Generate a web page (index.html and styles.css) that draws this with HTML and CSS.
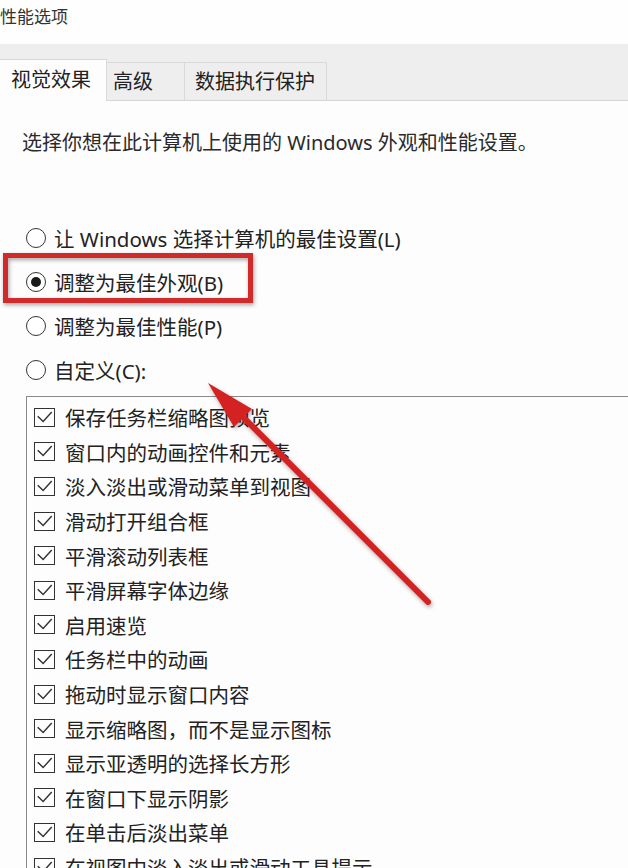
FILE: index.html
```html
<!DOCTYPE html>
<html lang="zh">
<head>
<meta charset="utf-8">
<link rel="stylesheet" href="styles.css">
</head>
<body>
<div class="page">
  <div class="title">性能选项</div>
  <div class="tabs">
    <div class="tab active">视觉效果</div>
    <div class="tab t2">高级</div>
    <div class="tab t3">数据执行保护</div>
  </div>
  <div class="content">
    <p class="desc">选择你想在此计算机上使用的 Windows 外观和性能设置。</p>
    <div class="radios">
      <div class="radio-row"><span class="radio"></span><span>让 Windows 选择计算机的最佳设置(L)</span></div>
      <div class="radio-row"><span class="radio checked"></span><span>调整为最佳外观(B)</span></div>
      <div class="radio-row"><span class="radio"></span><span>调整为最佳性能(P)</span></div>
      <div class="radio-row"><span class="radio"></span><span>自定义(C):</span></div>
    </div>
    <div class="list">
      <div class="item"><span class="cb"><svg viewBox="0 0 21 18"><polyline points="3,7.5 9,13.5 18.5,3"/></svg></span><span>保存任务栏缩略图预览</span></div>
      <div class="item"><span class="cb"><svg viewBox="0 0 21 18"><polyline points="3,7.5 9,13.5 18.5,3"/></svg></span><span>窗口内的动画控件和元素</span></div>
      <div class="item"><span class="cb"><svg viewBox="0 0 21 18"><polyline points="3,7.5 9,13.5 18.5,3"/></svg></span><span>淡入淡出或滑动菜单到视图</span></div>
      <div class="item"><span class="cb"><svg viewBox="0 0 21 18"><polyline points="3,7.5 9,13.5 18.5,3"/></svg></span><span>滑动打开组合框</span></div>
      <div class="item"><span class="cb"><svg viewBox="0 0 21 18"><polyline points="3,7.5 9,13.5 18.5,3"/></svg></span><span>平滑滚动列表框</span></div>
      <div class="item"><span class="cb"><svg viewBox="0 0 21 18"><polyline points="3,7.5 9,13.5 18.5,3"/></svg></span><span>平滑屏幕字体边缘</span></div>
      <div class="item"><span class="cb"><svg viewBox="0 0 21 18"><polyline points="3,7.5 9,13.5 18.5,3"/></svg></span><span>启用速览</span></div>
      <div class="item"><span class="cb"><svg viewBox="0 0 21 18"><polyline points="3,7.5 9,13.5 18.5,3"/></svg></span><span>任务栏中的动画</span></div>
      <div class="item"><span class="cb"><svg viewBox="0 0 21 18"><polyline points="3,7.5 9,13.5 18.5,3"/></svg></span><span>拖动时显示窗口内容</span></div>
      <div class="item"><span class="cb"><svg viewBox="0 0 21 18"><polyline points="3,7.5 9,13.5 18.5,3"/></svg></span><span>显示缩略图，而不是显示图标</span></div>
      <div class="item"><span class="cb"><svg viewBox="0 0 21 18"><polyline points="3,7.5 9,13.5 18.5,3"/></svg></span><span>显示亚透明的选择长方形</span></div>
      <div class="item"><span class="cb"><svg viewBox="0 0 21 18"><polyline points="3,7.5 9,13.5 18.5,3"/></svg></span><span>在窗口下显示阴影</span></div>
      <div class="item"><span class="cb"><svg viewBox="0 0 21 18"><polyline points="3,7.5 9,13.5 18.5,3"/></svg></span><span>在单击后淡出菜单</span></div>
      <div class="item"><span class="cb"><svg viewBox="0 0 21 18"><polyline points="3,7.5 9,13.5 18.5,3"/></svg></span><span>在视图中淡入淡出或滑动工具提示</span></div>
    </div>
  </div>
  <svg class="annot" viewBox="0 0 628 868" width="628" height="868">
    <rect class="hl" x="5.5" y="255.5" width="245" height="45"/>
    <g class="arrow">
      <line x1="428" y1="602" x2="238" y2="412"/>
      <polygon points="208,383 252,409 234,427"/>
    </g>
  </svg>
</div>
</body>
</html>
```

FILE: styles.css
```css
html, body {
  margin: 0;
  padding: 0;
  background: #fdfdfd;
  overflow: hidden;
}
.page {
  position: relative;
  width: 628px;
  height: 868px;
  overflow: hidden;
  font-family: "Noto Sans", "Noto Sans CJK SC", sans-serif;
  color: #222;
}
.title {
  height: 44px;
  line-height: 34px;
  font-size: 17px;
  color: #333;
  background: #fefefe;
}
.tabs {
  height: 56px;
  background: #efeeef;
  border-bottom: 1px solid #d6d6d6;
  display: flex;
  align-items: flex-end;
}
.tab {
  box-sizing: border-box;
  height: 38px;
  font-size: 20px;
  line-height: 38px;
  border: 1px solid #d9d9d9;
  border-bottom: none;
  color: #222;
}
.tab.active {
  height: 42px;
  width: 107px;
  padding-left: 11px;
  background: #fdfdfd;
  border-left: none;
  line-height: 40px;
  margin-bottom: -1px;
  position: relative;
  z-index: 1;
}
.tab.t2 {
  width: 78px;
  padding-left: 6px;
  border-left: none;
}
.tab.t3 {
  width: 142px;
  padding-left: 10px;
  border-left: none;
}
.content {
  padding-left: 22px;
}
.desc {
  margin: 27px 0 0 0;
  font-size: 20px;
  line-height: 30px;
  color: #2a2a2a;
}
.radios {
  margin-top: 58px;
  margin-left: 4px;
}
.radio-row {
  height: 44px;
  display: flex;
  align-items: center;
  gap: 8px;
  font-size: 20.5px;
  color: #222;
}
.radio {
  box-sizing: border-box;
  width: 20px;
  height: 20px;
  border: 1.5px solid #333;
  border-radius: 50%;
  background: #fff;
  display: flex;
  align-items: center;
  justify-content: center;
  flex: none;
}
.radio.checked::after {
  content: "";
  width: 10px;
  height: 10px;
  border-radius: 50%;
  background: #1a1a1a;
}
.list {
  margin-top: 4px;
  margin-left: 4px;
  width: 700px;
  height: 600px;
  border: 1px solid #8a8a8a;
  background: #fdfdfd;
  padding: 3px 0 0 7px;
}
.item {
  height: 34.6px;
  display: flex;
  align-items: center;
  gap: 10px;
  font-size: 20.5px;
  color: #222;
}
.cb {
  box-sizing: border-box;
  width: 21px;
  height: 19px;
  border: 1.5px solid #333;
  background: #fff;
  flex: none;
  display: flex;
}
.cb svg {
  width: 100%;
  height: 100%;
}
.cb polyline {
  fill: none;
  stroke: #333;
  stroke-width: 1.6;
}
.annot {
  position: absolute;
  left: 0;
  top: 0;
  pointer-events: none;
}
.hl {
  fill: none;
  stroke: #d12a2a;
  stroke-width: 5;
  filter: drop-shadow(1px 2px 2px rgba(0, 0, 0, 0.35));
}
.arrow {
  filter: drop-shadow(1px 2px 2px rgba(0, 0, 0, 0.35));
}
.arrow line {
  stroke: #d42222;
  stroke-width: 6;
  stroke-linecap: round;
}
.arrow polygon {
  fill: #d42222;
}
```
